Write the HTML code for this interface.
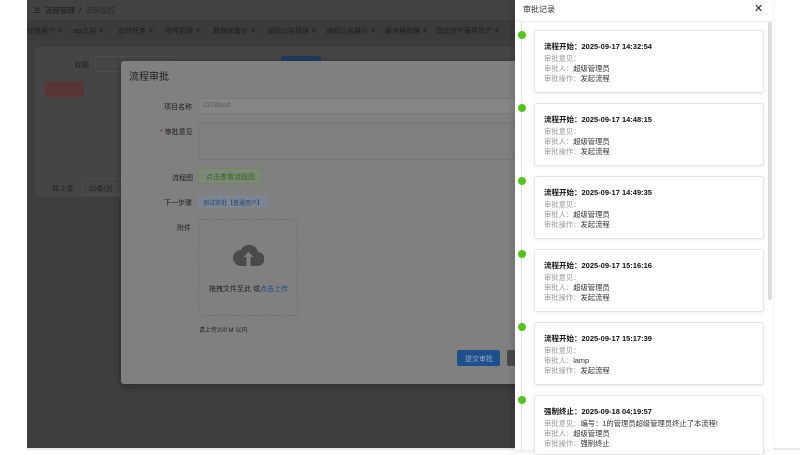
<!DOCTYPE html>
<html><head><meta charset="utf-8"><style>
*{margin:0;padding:0;box-sizing:border-box}
body{width:800px;height:450px;overflow:hidden;background:#fff;font-family:"Liberation Sans","Noto Sans CJK SC",sans-serif;position:relative}
.a{position:absolute}
.t{font-size:7px;color:#2a2a2a;white-space:nowrap}
.tab{position:absolute;top:26px;font-size:7px;color:#1e1e1e;white-space:nowrap}
.card{position:absolute;left:534px;width:230px;height:63px;background:#fff;border:1px solid #e4e4e4;border-radius:3px;box-shadow:0 1px 3px rgba(0,0,0,.08)}
.card .h{position:absolute;left:9px;top:10px;font-size:7.5px;font-weight:bold;color:#111;white-space:nowrap}
.card .l{position:absolute;left:9px;font-size:7.3px;color:#999;white-space:nowrap}
.card .l b{font-weight:normal;color:#333}
.dot{position:absolute;left:518px;width:8px;height:8px;border-radius:50%;background:#52c41a}
</style></head><body>
<div class="a" style="left:27px;top:0;width:488px;height:448px;background:#3e3e3e"></div>
<div class="a" style="left:27px;top:0;width:488px;height:20px;background:#424242"></div>
<div class="a t" style="left:34px;top:5px;color:#1a1a1a;font-size:7.5px">☰ &nbsp;流程管理 &nbsp;/ &nbsp;<span style="color:#2a2a2a">流程监控</span></div>
<div class="a" style="left:27px;top:20px;width:488px;height:20px;background:#3b3b3b"></div>
<div class="tab" style="left:27px">在线用户 ✕</div>
<div class="tab" style="left:73px">api文档 ✕</div>
<div class="tab" style="left:118px">定时任务 ✕</div>
<div class="tab" style="left:165px">附件管理 ✕</div>
<div class="tab" style="left:213px">数据库备份 ✕</div>
<div class="tab" style="left:267px">通知公告管理 ✕</div>
<div class="tab" style="left:326px">通知公告展示 ✕</div>
<div class="tab" style="left:385px">服务器管理 ✕</div>
<div class="tab" style="left:436px">固定资产硬件资产 ✕</div>
<div class="a" style="left:35px;top:47px;width:480px;height:150px;background:#454545"></div>
<div class="a t" style="left:75px;top:60px;color:#1e1e1e">标题</div>
<div class="a" style="left:95px;top:56px;width:80px;height:16px;border:1px solid #4c4c4c;border-radius:2px"></div>
<div class="a" style="left:281px;top:56px;width:40px;height:16px;background:#1f3a5e;border-radius:2px"></div>
<div class="a" style="left:45px;top:81px;width:39px;height:16px;background:#5a3535;border-radius:2px"></div>
<div class="a t" style="left:52px;top:184px;color:#1e1e1e">共 2 条</div>
<div class="a" style="left:82px;top:178px;width:40px;height:17px;border:1px solid #4c4c4c;border-radius:2px"></div>
<div class="a t" style="left:89px;top:184px;color:#1e1e1e">10条/页</div>
<div class="a" style="left:121px;top:61px;width:400px;height:323px;background:#808080;border-radius:3px;box-shadow:0 2px 8px rgba(0,0,0,.3)"></div>
<div class="a" style="left:129px;top:68px;font-size:10px;color:#1a1a1a">流程审批</div>
<div class="a t" style="left:164px;top:102px;color:#1e1e1e">项目名称</div>
<div class="a" style="left:198px;top:98px;width:320px;height:16px;background:#858585;border:1px solid #7a7a7a;border-radius:2px"></div>
<div class="a t" style="left:203px;top:102px;color:#5a5a5a">222dasd</div>
<div class="a t" style="left:160px;top:127px;color:#1e1e1e"><span style="color:#6a2a2a">*</span> 审批意见</div>
<div class="a" style="left:198px;top:123px;width:320px;height:37px;border:1px solid #767676;border-radius:2px"></div>
<div class="a t" style="left:172px;top:173px;color:#1e1e1e">流程图</div>
<div class="a" style="left:198px;top:168px;width:65px;height:16px;border:1px solid #6c8a5a;background:#7f877b;border-radius:2px"></div>
<div class="a t" style="left:206px;top:172px;color:#2f6a1a">点击查看流程图</div>
<div class="a t" style="left:164px;top:198px;color:#1e1e1e">下一步骤</div>
<div class="a" style="left:198px;top:195px;width:70px;height:13px;background:#7f8590;border-radius:2px"></div>
<div class="a t" style="left:203px;top:198px;color:#1f4a80;font-size:6px">测试审批【普通用户】</div>
<div class="a t" style="left:177px;top:223px;color:#1e1e1e">附件</div>
<div class="a" style="left:198px;top:219px;width:100px;height:97px;border:1px dashed #6e6e6e;border-radius:3px"></div>
<svg class="a" style="left:233px;top:244px" width="31" height="24" viewBox="0 0 31 24"><path d="M8 22h16a7 7 0 0 0 1-14A9 9 0 0 0 8 6a8 8 0 0 0 0 16z" fill="#4a4a4a"/><path d="M15.5 8l-5 5h3v9h4v-9h3z" fill="#808080"/></svg>
<div class="a t" style="left:209px;top:284px;color:#222">拖拽文件至此 或<span style="color:#1f4a80">点击上传</span></div>
<div class="a t" style="left:199px;top:325px;color:#222;font-size:6px">请上传200 M 以内</div>
<div class="a" style="left:457px;top:350px;width:43px;height:16px;background:#1f4f8a;border-radius:2px"></div>
<div class="a t" style="left:465px;top:354px;color:#8aa6c8">提交审批</div>
<div class="a" style="left:507px;top:350px;width:10px;height:16px;background:#4a4a4a;border-radius:2px"></div>
<div class="a" style="left:27px;top:448px;width:773px;height:2px;background:#e8e8e8"></div>
<div class="a" style="left:515px;top:0;width:258px;height:450px;background:#fff;box-shadow:-2px 0 6px rgba(0,0,0,.15)"></div>
<div class="a" style="left:523px;top:4px;font-size:8px;color:#333">审批记录</div>
<div class="a" style="left:754px;top:2px;font-size:11px;color:#222">✕</div>
<div class="a" style="left:515px;top:21px;width:258px;height:1px;background:#eee"></div>
<div class="a" style="left:521px;top:22px;width:1px;height:428px;background:#e5e5e5"></div>
<div class="a" style="left:768px;top:22px;width:4px;height:278px;background:#ddd;border-radius:2px"></div>
<div class="dot" style="top:31px"></div><div class="dot" style="top:104px"></div><div class="dot" style="top:177px"></div><div class="dot" style="top:250px"></div><div class="dot" style="top:323px"></div><div class="dot" style="top:396px"></div>
<div class="card" style="top:30px"><div class="h">流程开始：2025-09-17 14:32:54</div><div class="l" style="top:23px">审批意见：</div><div class="l" style="top:33px">审批人：<b>超级管理员</b></div><div class="l" style="top:43px">审批操作：<b>发起流程</b></div></div>
<div class="card" style="top:103px"><div class="h">流程开始：2025-09-17 14:48:15</div><div class="l" style="top:23px">审批意见：</div><div class="l" style="top:33px">审批人：<b>超级管理员</b></div><div class="l" style="top:43px">审批操作：<b>发起流程</b></div></div>
<div class="card" style="top:176px"><div class="h">流程开始：2025-09-17 14:49:35</div><div class="l" style="top:23px">审批意见：</div><div class="l" style="top:33px">审批人：<b>超级管理员</b></div><div class="l" style="top:43px">审批操作：<b>发起流程</b></div></div>
<div class="card" style="top:249px"><div class="h">流程开始：2025-09-17 15:16:16</div><div class="l" style="top:23px">审批意见：</div><div class="l" style="top:33px">审批人：<b>超级管理员</b></div><div class="l" style="top:43px">审批操作：<b>发起流程</b></div></div>
<div class="card" style="top:322px"><div class="h">流程开始：2025-09-17 15:17:39</div><div class="l" style="top:23px">审批意见：</div><div class="l" style="top:33px">审批人：<b>lamp</b></div><div class="l" style="top:43px">审批操作：<b>发起流程</b></div></div>
<div class="card" style="top:395px;height:60px"><div class="h">强制终止：2025-09-18 04:19:57</div><div class="l" style="top:23px">审批意见：<b>编号：1的管理员超级管理员终止了本流程!</b></div><div class="l" style="top:33px">审批人：<b>超级管理员</b></div><div class="l" style="top:43px">审批操作：<b>强制终止</b></div></div>
</body></html>
